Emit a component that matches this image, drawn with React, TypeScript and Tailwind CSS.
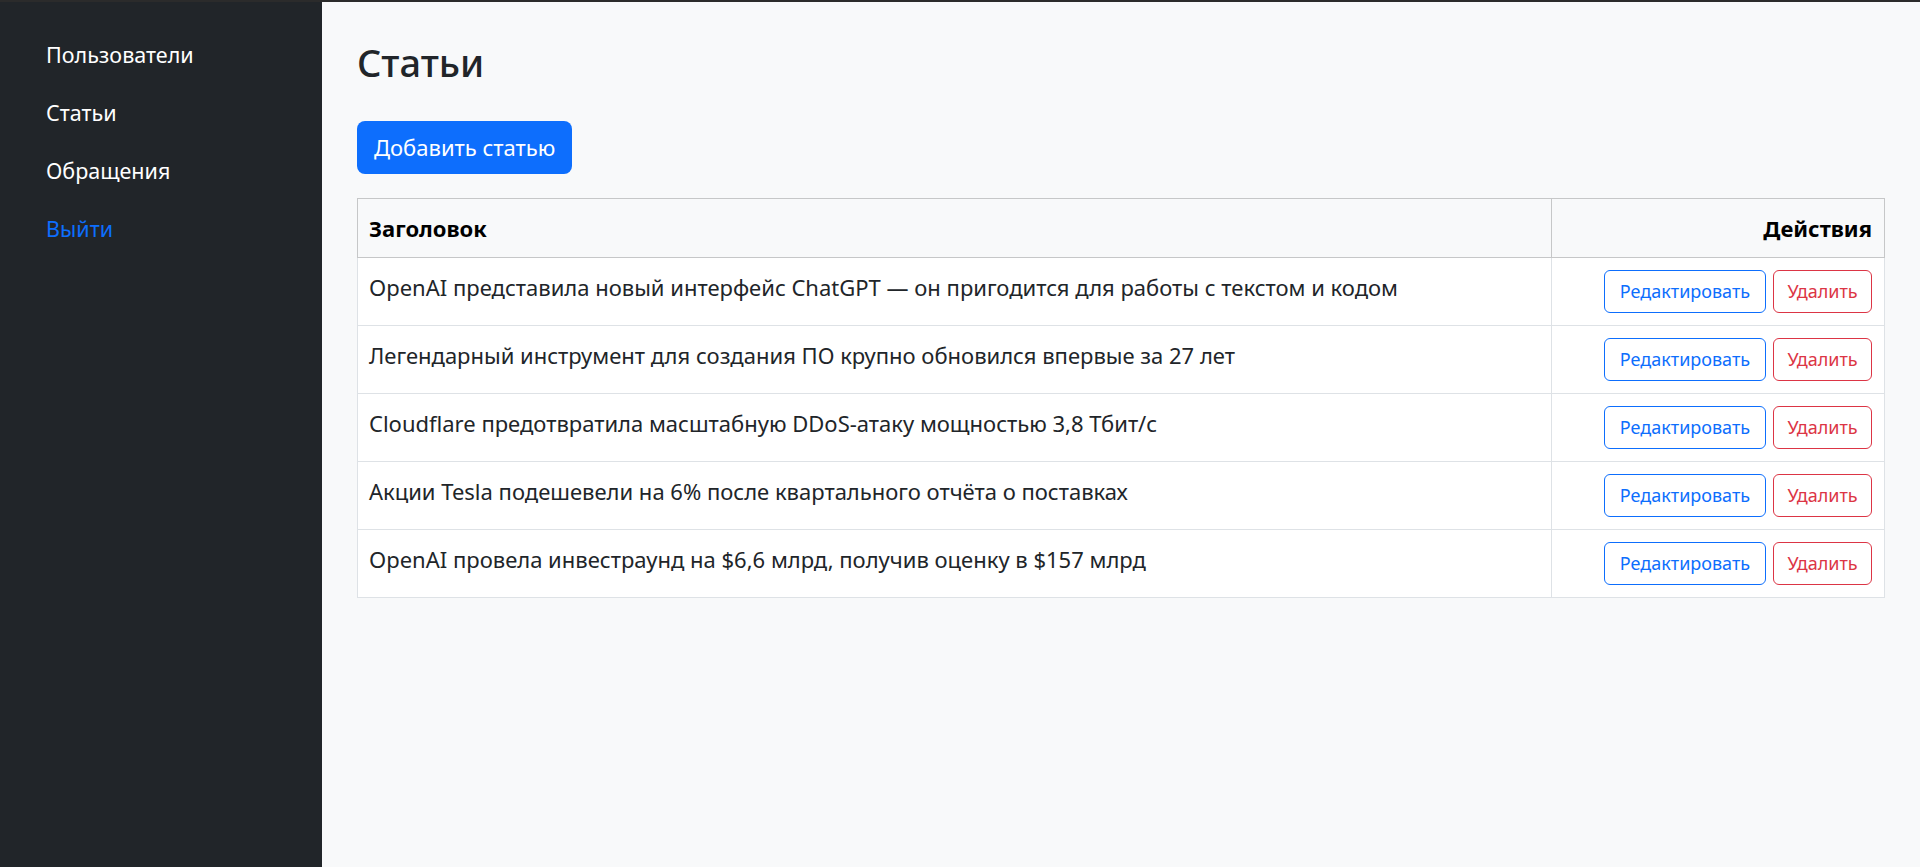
import React from "react";

const articles = [
  "OpenAI представила новый интерфейс ChatGPT — он пригодится для работы с текстом и кодом",
  "Легендарный инструмент для создания ПО крупно обновился впервые за 27 лет",
  "Cloudflare предотвратила масштабную DDoS-атаку мощностью 3,8 Тбит/с",
  "Акции Tesla подешевели на 6% после квартального отчёта о поставках",
  "OpenAI провела инвестраунд на $6,6 млрд, получив оценку в $157 млрд",
];

export default function App() {
  return (
    <div
      className="flex h-[867px] w-full overflow-hidden border-t-2 border-[#2b2b2b]"
      style={{ fontFamily: '"Noto Sans", "Open Sans", sans-serif' }}
    >
      <aside className="w-[322px] shrink-0 bg-[#212529] pt-[24px] pl-[46px]">
        <nav className="flex flex-col text-[21.5px]">
          <a className="flex h-[58px] items-center text-white">Пользователи</a>
          <a className="flex h-[58px] items-center text-white">Статьи</a>
          <a className="flex h-[58px] items-center text-white">Обращения</a>
          <a className="flex h-[58px] items-center text-[#0d6efd]">Выйти</a>
        </nav>
      </aside>
      <main className="flex-1 bg-[#f8f9fa] px-[35px] pt-[35px] text-[#212529]">
        <h2 className="text-[38px] leading-[50px] font-medium">Статьи</h2>
        <button className="mt-[34px] h-[53px] rounded-[8px] bg-[#0d6efd] px-[17px] text-[22px] text-white">
          Добавить статью
        </button>
        <table className="mt-[24px] w-full border-collapse text-[22px]">
          <thead>
            <tr className="h-[59px] bg-[#f8f9fa] text-black">
              <th className="border border-[#c6c7c8] px-[11px] text-left font-bold">Заголовок</th>
              <th className="w-[333px] border border-[#c6c7c8] px-[12px] text-right font-bold">Действия</th>
            </tr>
          </thead>
          <tbody>
            {articles.map((a) => (
              <tr key={a} className="h-[68px] bg-white">
                <td className="border border-[#dee2e6] px-[11px] pb-[9px]">{a}</td>
                <td className="border border-[#dee2e6] px-[12px]">
                  <div className="flex justify-end gap-[7px]">
                    <button className="h-[43px] w-[162px] rounded-[6px] border border-[#0d6efd] text-[18px] text-[#0d6efd]">
                      Редактировать
                    </button>
                    <button className="h-[43px] w-[99px] rounded-[6px] border border-[#dc3545] text-[18px] text-[#dc3545]">
                      Удалить
                    </button>
                  </div>
                </td>
              </tr>
            ))}
          </tbody>
        </table>
      </main>
    </div>
  );
}
